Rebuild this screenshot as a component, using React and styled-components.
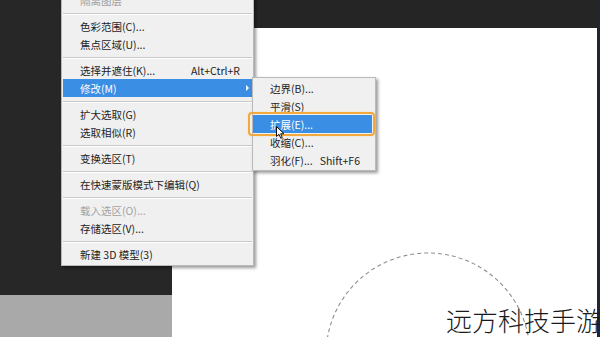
import React from 'react';
import styled, { createGlobalStyle } from 'styled-components';

const GlobalStyle = createGlobalStyle`
  html, body {
    margin: 0;
    padding: 0;
    background: #262626;
    overflow: hidden;
  }
  * {
    box-sizing: border-box;
  }
`;

const mainItems = [
  { label: '隔离图层', disabled: true },
  { sep: true },
  { label: '色彩范围(C)...' },
  { label: '焦点区域(U)...' },
  { sep: true },
  { label: '选择并遮住(K)...', shortcut: 'Alt+Ctrl+R' },
  { label: '修改(M)', active: true, hasSub: true },
  { sep: true },
  { label: '扩大选取(G)' },
  { label: '选取相似(R)' },
  { sep: true },
  { label: '变换选区(T)' },
  { sep: true },
  { label: '在快速蒙版模式下编辑(Q)' },
  { sep: true },
  { label: '载入选区(O)...', disabled: true },
  { label: '存储选区(V)...' },
  { sep: true },
  { label: '新建 3D 模型(3)' },
];

const subItems = [
  { label: '边界(B)...' },
  { label: '平滑(S)' },
  { label: '扩展(E)...', active: true, marked: true },
  { label: '收缩(C)...' },
  { label: '羽化(F)...', shortcut: 'Shift+F6' },
];

const App = () => {
  const renderItems = (items) =>
    items.map((item, i) =>
      item.sep ? (
        <Separator key={i} />
      ) : (
        <Item key={i} active={item.active} disabled={item.disabled} marked={item.marked}>
          <span>{item.label}</span>
          {item.shortcut && <Shortcut>{item.shortcut}</Shortcut>}
          {item.hasSub && <SubArrow />}
        </Item>
      )
    );

  return (
    <>
      <GlobalStyle />
      <Workspace>
        <LeftPane>
          <DarkFill />
          <GreyPanel />
        </LeftPane>
        <CanvasPane>
          <TopBar />
          <Canvas>
            {/* marching ants of the circular selection */}
            <svg width="100%" height="100%">
              <circle
                cx="256"
                cy="327"
                r="102"
                fill="none"
                stroke="#8e8e8e"
                strokeWidth="1.1"
                strokeDasharray="4 3"
              />
            </svg>
          </Canvas>
        </CanvasPane>
        <RightEdge />

        <MainMenu>{renderItems(mainItems)}</MainMenu>
        <SubMenu>{renderItems(subItems)}</SubMenu>

        <Cursor width="9" height="13" viewBox="0 0 9 13">
          <path d="M0.5 0.5 L0.5 10.5 L3 8.3 L4.8 12.3 L6.3 11.6 L4.6 7.8 L8 7.8 Z" fill="#fff" stroke="#111" strokeWidth="1" />
        </Cursor>

        <Watermark>远方科技手游</Watermark>
      </Workspace>
    </>
  );
};

const Workspace = styled.div`
  position: relative;
  width: 600px;
  height: 337px;
  display: flex;
  overflow: hidden;
  background: #262626;
`;

const LeftPane = styled.div`
  width: 172px;
  display: flex;
  flex-direction: column;
`;

const DarkFill = styled.div`
  flex: 1;
  background: #272727;
`;

const GreyPanel = styled.div`
  height: 42px;
  background: #a9a9a9;
`;

const CanvasPane = styled.div`
  flex: 1;
  display: flex;
  flex-direction: column;
`;

const TopBar = styled.div`
  height: 28px;
  background: #252525;
`;

const Canvas = styled.div`
  flex: 1;
  background: #ffffff;

  svg {
    display: block;
  }
`;

const RightEdge = styled.div`
  width: 3px;
  background: #1f2631;
`;

const MenuBase = styled.div`
  position: absolute;
  background: #f0f0f0;
  border: 1px solid #b9b9b9;
  box-shadow: 2px 2px 3px rgba(0, 0, 0, 0.4);
  font-family: "Noto Sans CJK SC", "Noto Sans", sans-serif;
  font-size: 10.5px;
  color: #1e1e1e;
  z-index: 2;
`;

const MainMenu = styled(MenuBase)`
  left: 61px;
  top: -12px;
  width: 193px;
  padding: 2px 1px;
`;

const SubMenu = styled(MenuBase)`
  left: 252px;
  top: 77px;
  width: 124px;
  padding: 1px 3px 1px 0;
  z-index: 3;
`;

const Item = styled.div`
  position: relative;
  height: 18px;
  display: flex;
  align-items: center;
  padding: 0 12px 0 17px;
  white-space: nowrap;
  background: ${p => (p.active ? '#3a8ee4' : 'transparent')};
  color: ${p => (p.active ? '#ffffff' : p.disabled ? '#a2a2a2' : '#1e1e1e')};

  ${p =>
    p.marked &&
    `
    &::after {
      content: '';
      position: absolute;
      left: -5px;
      right: -3px;
      top: -3px;
      bottom: -3px;
      border: 2px solid #f2a93a;
      border-radius: 4px;
      box-shadow: 0 0 1px rgba(242, 169, 58, 0.6);
    }
  `}
`;

const Shortcut = styled.span`
  margin-left: auto;
`;

const SubArrow = styled.span`
  position: absolute;
  right: 3px;
  top: 6px;
  width: 0;
  height: 0;
  border-top: 3px solid transparent;
  border-bottom: 3px solid transparent;
  border-left: 3px solid #ffffff;
`;

const Separator = styled.div`
  height: 8px;
  display: flex;
  align-items: center;

  &::before {
    content: '';
    flex: 1;
    height: 1px;
    background: #c9c9c9;
    box-shadow: 0 1px 0 #ffffff;
  }
`;

const Cursor = styled.svg`
  position: absolute;
  left: 276px;
  top: 126px;
  z-index: 4;
`;

const Watermark = styled.div`
  position: absolute;
  right: -2px;
  bottom: 3px;
  font-family: "Noto Sans CJK SC", sans-serif;
  font-weight: 300;
  font-size: 26px;
  line-height: 28px;
  color: #1a1a1a;
  z-index: 1;
`;

export default App;
